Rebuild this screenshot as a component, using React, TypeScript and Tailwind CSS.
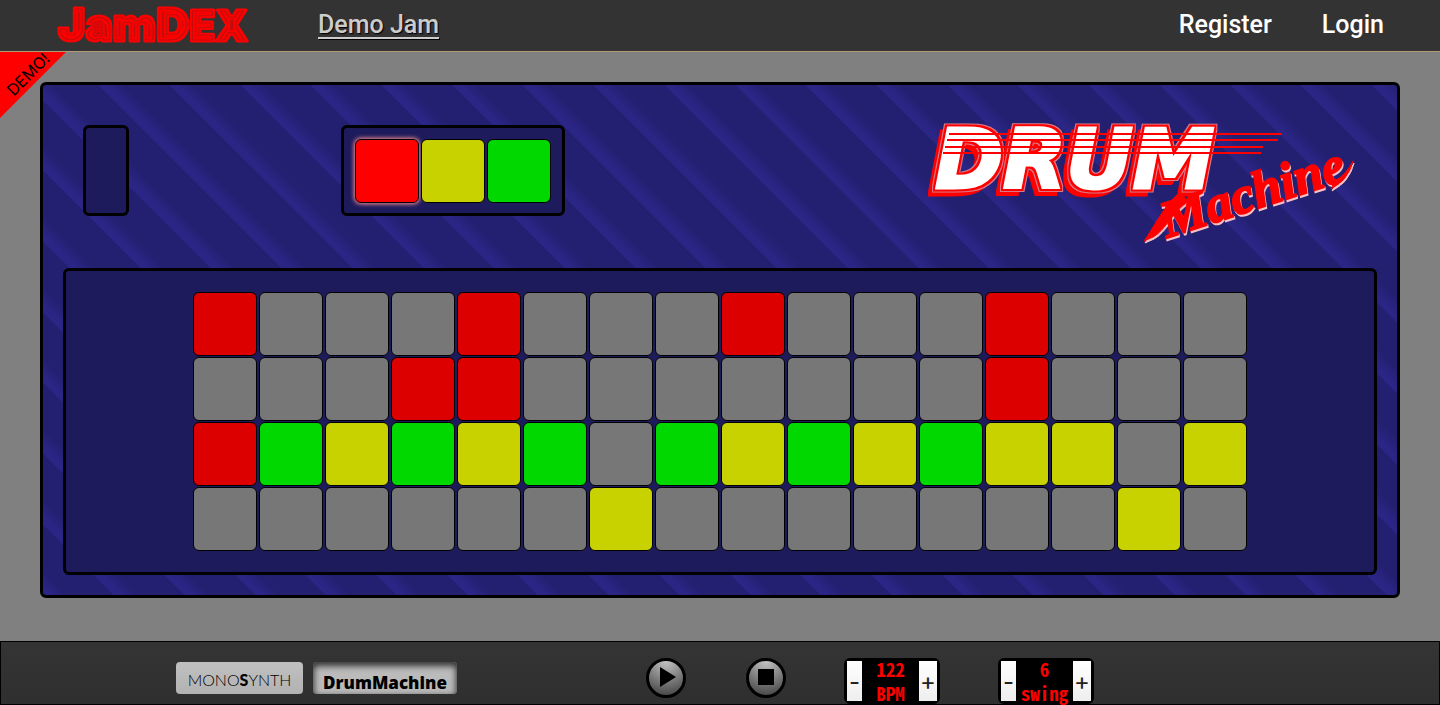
import { useState } from "react";

type Level = 0 | 1 | 2 | 3;

const COLORS: Record<Level, string> = {
  0: "bg-[#777777]",
  1: "bg-[#dd0000]",
  2: "bg-[#c8d200]",
  3: "bg-[#00d800]",
};

const PATTERN: Level[][] = [
  [1, 0, 0, 0, 1, 0, 0, 0, 1, 0, 0, 0, 1, 0, 0, 0],
  [0, 0, 0, 1, 1, 0, 0, 0, 0, 0, 0, 0, 1, 0, 0, 0],
  [1, 3, 2, 3, 2, 3, 0, 3, 2, 3, 2, 3, 2, 2, 0, 2],
  [0, 0, 0, 0, 0, 0, 2, 0, 0, 0, 0, 0, 0, 0, 2, 0],
];

function Grown({ operator, radius, color, name }: { operator: "erode" | "dilate"; radius: number; color: string; name: string }) {
  return (
    <>
      <feMorphology in="SourceAlpha" operator={operator} radius={radius} result={`${name}-shape`} />
      <feFlood floodColor={color} result={`${name}-color`} />
      <feComposite in={`${name}-color`} in2={`${name}-shape`} operator="in" result={name} />
    </>
  );
}

function JamDexLogo() {
  return (
    <svg viewBox="0 0 200 48" className="h-12 w-[200px] shrink-0" role="img" aria-label="JamDex">
      <filter id="inline-rings" x="-5%" y="-10%" width="110%" height="120%" colorInterpolationFilters="sRGB">
        <Grown operator="erode" radius={2} color="#c40c0c" name="r1" />
        <Grown operator="erode" radius={3} color="#ff0000" name="r2" />
        <Grown operator="erode" radius={5} color="#c40c0c" name="r3" />
        <feMerge>
          <feMergeNode in="SourceGraphic" />
          <feMergeNode in="r1" />
          <feMergeNode in="r2" />
          <feMergeNode in="r3" />
        </feMerge>
      </filter>
      <text
        x="2"
        y="40"
        fontFamily="Inter, sans-serif"
        fontWeight="900"
        fontSize="46"
        fill="#ff0000"
        stroke="#ff0000"
        strokeWidth="3"
        strokeLinejoin="round"
        filter="url(#inline-rings)"
      >
        JamD<tspan fontSize="42">EX</tspan>
      </text>
    </svg>
  );
}

function DrumLogo() {
  return (
    <svg viewBox="0 0 580 123" className="h-[123px] w-[580px] overflow-visible" role="img" aria-label="Drum Machine">
      <filter id="neon-outline" x="-10%" y="-20%" width="120%" height="150%" colorInterpolationFilters="sRGB">
        <Grown operator="dilate" radius={3} color="#d87888" name="edge" />
        <Grown operator="dilate" radius={2} color="#ff0000" name="band" />
        <feOffset in="band" dx="-5" dy="5" result="back" />
        <feMerge>
          <feMergeNode in="back" />
          <feMergeNode in="edge" />
          <feMergeNode in="band" />
          <feMergeNode in="SourceGraphic" />
        </feMerge>
      </filter>
      <filter id="script-shadow" x="-10%" y="-20%" width="120%" height="150%" colorInterpolationFilters="sRGB">
        <feDropShadow dx="1" dy="2" stdDeviation="0" floodColor="#f6c0c6" />
      </filter>
      <text
        x="158"
        y="63"
        fontFamily="'DejaVu Sans', sans-serif"
        fontWeight="700"
        fontStyle="italic"
        fontSize="82"
        fill="#ffffff"
        stroke="#ffffff"
        strokeWidth="3"
        filter="url(#neon-outline)"
      >
        DRUM
      </text>
      <path d="M172 9H505M170 15H501M168 22H486M166 28H484" stroke="#ff0000" strokeWidth="2" fill="none" />
      <g filter="url(#script-shadow)" fill="#ff0000" stroke="#ff0000">
        <path d="M367 116C376 104 386 82 402 68L412 76C396 86 388 106 376 112Z" strokeWidth="1" />
        <path d="M558 56Q569 50 576 36Q572 54 554 64Z" strokeWidth="1" />
        <text
          transform="translate(390 113) rotate(-18)"
          fontFamily="'Liberation Serif', serif"
          fontStyle="italic"
          fontWeight="700"
          fontSize="52"
          strokeWidth="2"
        >
          Machine
        </text>
      </g>
    </svg>
  );
}

function Pad({ level, label, selected, onClick }: { level: Level; label: string; selected?: boolean; onClick: () => void }) {
  return (
    <button
      type="button"
      aria-label={label}
      aria-pressed={selected}
      onClick={onClick}
      className={`mx-px mt-px size-16 rounded-md border border-black ${
        selected ? "bg-[#ff0000] shadow-[0_0_4px_1px_#ff9090]" : COLORS[level]
      }`}
    />
  );
}

function Stepper({ name, value, onChange }: { name: string; value: number; onChange: (v: number) => void }) {
  return (
    <div className="flex h-[46px] w-24 rounded-md border-3 border-black bg-black">
      <button
        type="button"
        aria-label={`Decrease ${name}`}
        onClick={() => onChange(value - 1)}
        className="w-[15px] bg-linear-to-b from-white to-[#eeeeee] pt-0.5 text-2xl text-[#222222]"
      >
        -
      </button>
      <div className="flex flex-1 flex-col items-center justify-center font-['Noto_Sans_CJK_JP',monospace] text-[19px] leading-6 font-bold text-[#ff0000] [font-feature-settings:'hwid']">
        <span>{value}</span>
        <span>{name}</span>
      </div>
      <button
        type="button"
        aria-label={`Increase ${name}`}
        onClick={() => onChange(value + 1)}
        className="w-[18px] bg-linear-to-b from-white to-[#eeeeee] pt-0.5 text-2xl text-[#222222]"
      >
        +
      </button>
    </div>
  );
}

const TRANSPORT =
  "flex size-10 items-center justify-center rounded-full border-3 border-black bg-[radial-gradient(circle_at_50%_0%,#c4c4c4,#3c3c3c)]";

export default function App() {
  const [pattern, setPattern] = useState(PATTERN);
  const [brush, setBrush] = useState<Level>(1);
  const [bpm, setBpm] = useState(122);
  const [swing, setSwing] = useState(6);

  const toggle = (row: number, col: number) =>
    setPattern((p) =>
      p.map((r, i) => (i === row ? r.map((v, j) => (j === col ? (v === brush ? 0 : brush) : v)) : r)),
    );

  return (
    <div className="flex min-h-screen flex-col bg-[#808080] font-['Inter',sans-serif]">
      <header className="flex h-[52px] items-center border-b border-[#b09c74] bg-[#333333] px-14 pb-px font-['Roboto',sans-serif] text-[25px] font-medium">
        <a href="#home">
          <JamDexLogo />
        </a>
        <a
          href="#demo"
          className="ml-[62px] text-[#cccccc] underline decoration-2 underline-offset-4 [text-shadow:1px_1px_1px_#000]"
        >
          Demo Jam
        </a>
        <nav className="ml-auto flex gap-[50px] text-white">
          <a href="#register">Register</a>
          <a href="#login">Login</a>
        </nav>
      </header>

      <main className="relative flex-1 px-10 pt-[30px] pb-10">
        <div className="absolute top-0 left-0 size-[66px] bg-[#ff0000] [clip-path:polygon(0_0,100%_0,0_100%)]">
          <span className="absolute top-2.5 -left-3 w-20 -rotate-45 text-center text-base text-black">DEMO!</span>
        </div>

        <section className="rounded-md border-3 border-black bg-[repeating-linear-gradient(45deg,#2b2585_0px,#2b2585_5px,#232071_18px,#232071_50px)] p-5">
          <div className="flex h-[163px] items-start justify-between p-5">
            <div className="h-[91px] w-[46px] rounded-md border-3 border-black bg-[#1e1b5c]" />
            <div className="flex rounded-md border-3 border-black bg-[#1e1b5c] p-2.5">
              {([1, 2, 3] as Level[]).map((level) => (
                <Pad
                  key={level}
                  level={level}
                  label={`Accent ${level}`}
                  selected={brush === level}
                  onClick={() => setBrush(level)}
                />
              ))}
            </div>
            <DrumLogo />
          </div>

          <div className="rounded-md border-3 border-black bg-[#1e1b5c] pt-5 pb-[21px]">
            {pattern.map((row, i) => (
              <div key={i} className="flex justify-center">
                {row.map((level, j) => (
                  <Pad key={j} level={level} label={`Track ${i + 1}, step ${j + 1}`} onClick={() => toggle(i, j)} />
                ))}
              </div>
            ))}
          </div>
        </section>
      </main>

      <footer className="flex h-16 items-start border border-black bg-linear-to-b from-[#343434] to-[#2f2f2f] pt-4 pl-[175px]">
        <div className="mt-1 flex gap-2.5">
          <button
            type="button"
            className="h-8 w-[127px] rounded-sm bg-linear-to-b from-[#c0c0c0] to-[#b2b2b2] pt-1 font-['Lato',sans-serif] text-base font-light text-black"
          >
            MONO<b className="font-black">S</b>YNTH
          </button>
          <button
            type="button"
            className="h-8 w-36 rounded-sm bg-[#bbbbbb] pt-2 font-['Open_Sans',sans-serif] text-[17px] font-extrabold text-black shadow-[inset_0_3px_6px_1px_#333]"
          >
            DrumMachine
          </button>
        </div>
        <div className="ml-[189px] flex gap-15">
          <button type="button" aria-label="Play" className={TRANSPORT}>
            <svg viewBox="0 0 34 34" className="size-[34px] shrink-0">
              <path d="M11 6L27 16L11 26Z" />
            </svg>
          </button>
          <button type="button" aria-label="Stop" className={TRANSPORT}>
            <svg viewBox="0 0 34 34" className="size-[34px] shrink-0">
              <path d="M9 8H25V24H9Z" />
            </svg>
          </button>
        </div>
        <div className="ml-[58px] flex gap-[58px]">
          <Stepper name="BPM" value={bpm} onChange={setBpm} />
          <Stepper name="swing" value={swing} onChange={setSwing} />
        </div>
      </footer>
    </div>
  );
}
